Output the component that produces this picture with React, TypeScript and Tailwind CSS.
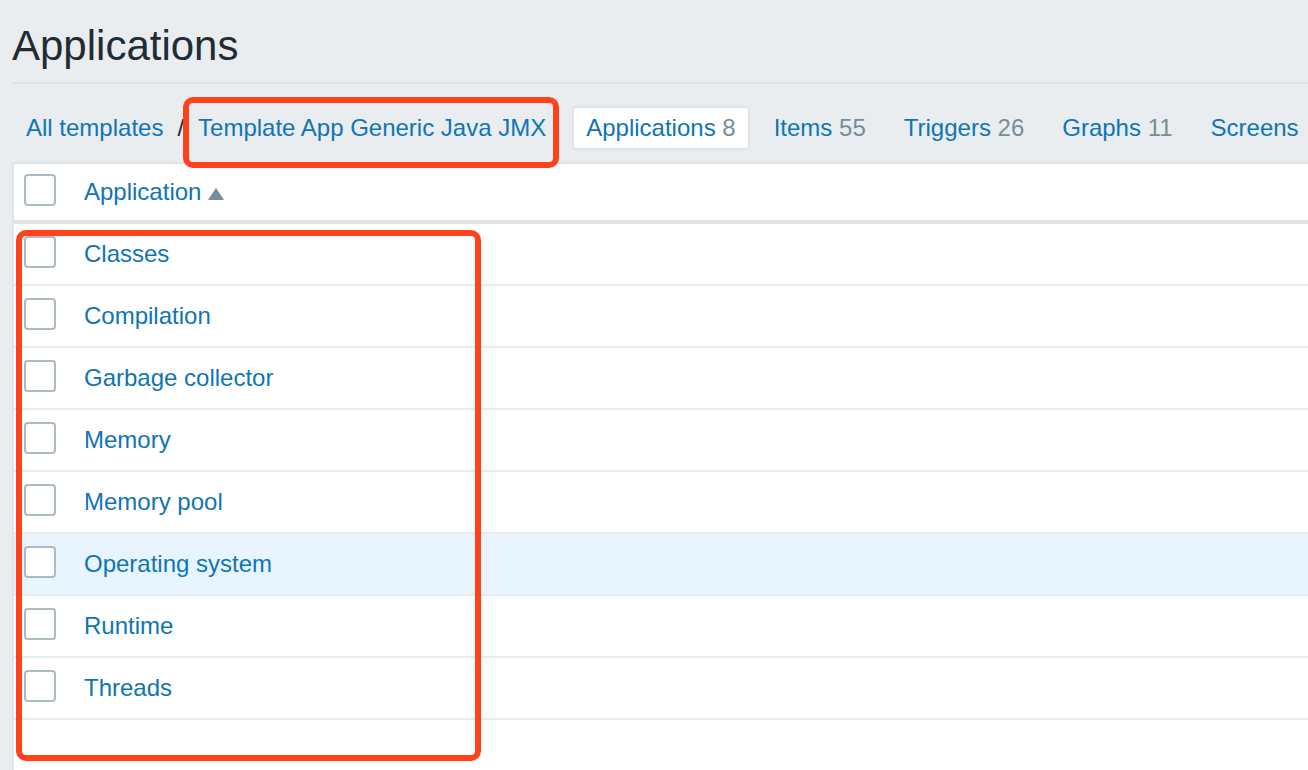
import React from "react";

const applications = [
  "Classes",
  "Compilation",
  "Garbage collector",
  "Memory",
  "Memory pool",
  "Operating system",
  "Runtime",
  "Threads",
];

const sections = [
  { name: "Applications", count: 8, active: true },
  { name: "Items", count: 55 },
  { name: "Triggers", count: 26 },
  { name: "Graphs", count: 11 },
  { name: "Screens" },
];

const checkboxStyle =
  "block size-8 appearance-none rounded-sm border-2 border-[#acbbc2] bg-white checked:bg-[#0275b8]";

function Callout({ className }: { className: string }) {
  return (
    <span
      aria-hidden="true"
      className={`pointer-events-none absolute z-10 rounded-[10px] border-6 border-[#ff421c] ${className}`}
    />
  );
}

function SectionNav() {
  return (
    <nav className="flex h-[78px] items-center whitespace-nowrap pt-3.5 pb-1">
      <a href="#templates" className="px-3.5 text-[#0f75b5]">
        All templates
      </a>
      <span>/</span>
      <a href="#template" className="relative mr-3 px-3.5 text-[#0f75b5]">
        Template App Generic Java JMX
        <Callout className="-top-[13px] -bottom-[22px] -left-px right-px" />
      </a>
      <ul className="flex items-center gap-2.5">
        {sections.map((s) => (
          <li key={s.name}>
            <a
              href={`#${s.name.toLowerCase()}`}
              className={`block rounded-sm border-2 px-3 leading-10 text-[#0f75b5] ${
                s.active ? "border-[#dfe4e7] bg-white" : "border-transparent"
              }`}
            >
              {s.name}
              {s.count && <span className="text-[#768d99]"> {s.count}</span>}
            </a>
          </li>
        ))}
      </ul>
    </nav>
  );
}

export default function App() {
  return (
    <main className="flex min-h-screen flex-col overflow-hidden bg-[#e9edf0] pl-3 font-['Liberation_Sans',Arial,sans-serif] text-2xl leading-9 text-[#1f2c33]">
      <h1 className="border-b-2 border-[#dfe4e7] pt-5 pb-2.5 text-[42px] leading-[52px]">
        Applications
      </h1>
      <SectionNav />
      <form className="relative grow border-t-2 border-l-2 border-[#dfe4e7] bg-white">
        <table className="w-full border-separate border-spacing-0 text-left">
          <thead>
            <tr className="h-[60px]">
              <th className="w-[60px] border-b-4 border-[#dfe4e7] pt-2.5 pl-2.5 align-top">
                <input type="checkbox" aria-label="Select all applications" className={checkboxStyle} />
              </th>
              <th className="border-b-4 border-[#dfe4e7] pt-2.5 pl-2.5 align-top font-normal">
                <a href="#sort" className="inline-flex items-center gap-[7px] text-[#0f75b5]">
                  Application
                  <svg aria-hidden="true" viewBox="0 0 16 12" className="mt-1 h-3 w-4 fill-[#768d99]">
                    <path d="M8 0l8 12H0z" />
                  </svg>
                </a>
              </th>
            </tr>
          </thead>
          <tbody>
            {applications.map((name, i) => (
              <tr
                key={name}
                className={`h-[62px] hover:bg-[#e8f5ff] ${name === "Operating system" ? "bg-[#e8f5ff]" : ""}`}
              >
                <td className="border-b-2 border-[#e9edf0] pt-3 pl-2.5 align-top">
                  <input id={`app-${i}`} type="checkbox" aria-label={name} className={checkboxStyle} />
                </td>
                <td className="border-b-2 border-[#e9edf0] pt-3 pl-2.5 align-top">
                  <a href={`#app-${i}`} className="text-[#0f75b5]">
                    {name}
                  </a>
                </td>
              </tr>
            ))}
          </tbody>
        </table>
        <Callout className="top-[66px] left-[2px] h-[531px] w-[465px]" />
      </form>
    </main>
  );
}
